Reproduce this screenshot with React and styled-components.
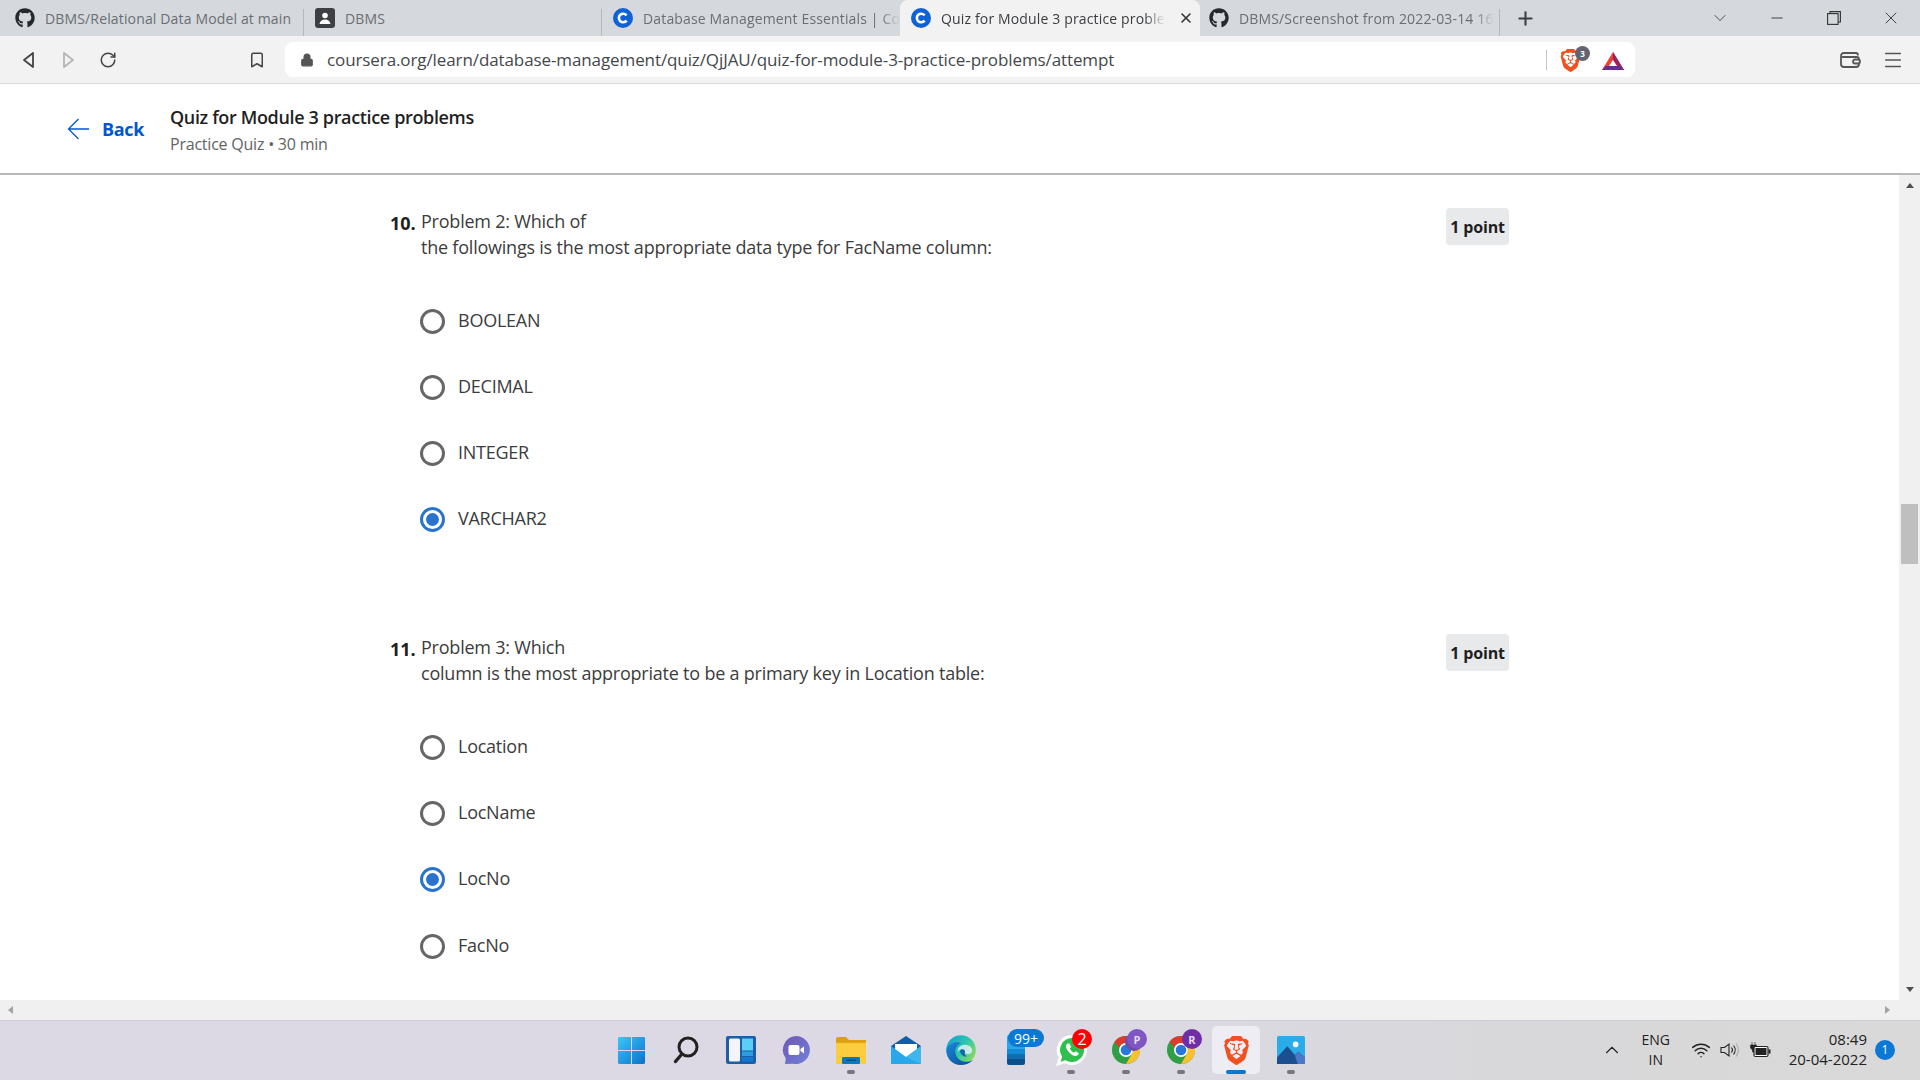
import React from "react";
import styled, { createGlobalStyle } from "styled-components";
import { FaGithub } from "react-icons/fa";
import { SiBrave } from "react-icons/si";
import { Lock, RotateCw, Bookmark, Plus, X, ChevronDown, ChevronUp, Minus, Menu, Wifi } from "lucide-react";

const GlobalStyle = createGlobalStyle`
  html, body { margin: 0; padding: 0; height: 100%; overflow: hidden; background: #fff; }
  * { box-sizing: border-box; }
  body { font-family: "Open Sans", "Noto Sans", sans-serif; }
`;

const Page = styled.div`
  width: 1920px;
  height: 1080px;
  display: flex;
  flex-direction: column;
  overflow: hidden;
`;

/* browser chrome */
const TabStrip = styled.div`
  height: 36px;
  background: #d5d8dc;
  display: flex;
  align-items: stretch;
  flex: none;
`;
const Tab = styled.div`
  width: ${(p) => p.$w}px;
  flex: none;
  display: flex;
  align-items: center;
  padding-left: ${(p) => p.$pad}px;
  gap: 10px;
  position: relative;
  background: ${(p) => (p.$active ? "#f2f2f2" : "transparent")};
  border-radius: ${(p) => (p.$active ? "8px 8px 0 0" : "0")};
  & > svg { flex: none; }
  &::after {
    content: "";
    display: ${(p) => (p.$sep ? "block" : "none")};
    position: absolute;
    right: 0;
    top: 9px;
    bottom: 0;
    width: 1px;
    background: #b4b7ba;
  }
`;
const TabTitle = styled.span`
  white-space: nowrap;
  font-size: 14px;
  letter-spacing: 0.15px;
  color: ${(p) => (p.$active ? "#3a3c3f" : "#6a6e73")};
  ${(p) =>
    p.$fade &&
    `-webkit-mask-image: linear-gradient(to right, #000 calc(100% - 20px), transparent);
     mask-image: linear-gradient(to right, #000 calc(100% - 20px), transparent);`}
`;
const TabClose = styled.span`
  display: flex;
  margin-left: auto;
  margin-right: 6px;
  color: #333;
`;
const NewTab = styled.div`
  width: 50px;
  display: flex;
  align-items: center;
  justify-content: center;
  color: #3c3f43;
`;
const WindowControls = styled.div`
  margin-left: auto;
  display: flex;
  align-items: center;
  color: #333;
`;
const WindowButton = styled.div`
  width: ${(p) => p.$w || 57}px;
  display: flex;
  justify-content: center;
`;

const Toolbar = styled.div`
  height: 48px;
  flex: none;
  background: #f2f2f2;
  border-bottom: 1px solid #d9d9d9;
  display: flex;
  align-items: center;
`;
const NavButton = styled.div`
  width: 40px;
  display: flex;
  justify-content: center;
  color: #444;
`;
const NavGroup = styled.div`
  display: flex;
  width: 285px;
  padding-left: 8px;
  & > :last-child { margin-left: 109px; }
`;
const Omnibox = styled.div`
  width: 1350px;
  height: 35px;
  background: #fff;
  border-radius: 8px;
  display: flex;
  align-items: center;
  padding: 0 10px 0 15px;
`;
const Url = styled.span`
  margin-left: 13px;
  font-size: 17px;
  letter-spacing: -0.1px;
  color: #44474a;
  white-space: nowrap;
  flex: 1;
`;
const OmniDivider = styled.span`
  width: 1px;
  height: 20px;
  background: #c4c4c4;
  margin-right: 12px;
`;
const ShieldWrap = styled.span`
  position: relative;
  display: flex;
  width: 30px;
  margin: 2px 12px 0 0;
`;
const ShieldCount = styled.span`
  position: absolute;
  left: 16px;
  top: -3px;
  width: 15px;
  height: 15px;
  border-radius: 50%;
  background: #62646f;
  color: #fff;
  font-size: 8px;
  font-weight: 700;
  display: flex;
  align-items: center;
  justify-content: center;
`;
const BatSlot = styled.span`
  display: flex;
  margin-top: 2px;
`;
const ToolbarEnd = styled.div`
  flex: 1;
  display: flex;
  align-items: center;
  justify-content: flex-end;
  gap: 21px;
  padding-right: 16px;
  color: #555;
`;

/* course header */
const Header = styled.header`
  height: 91px;
  flex: none;
  background: #fff;
  border-bottom: 2px solid #b9b9b9;
  display: flex;
  align-items: center;
  padding: 0 0 0 67px;
`;
const BackLink = styled.a`
  display: flex;
  align-items: center;
  gap: 13px;
  width: 103px;
  color: #0056d2;
  font-size: 18px;
  font-weight: 700;
  letter-spacing: -0.3px;
  margin-top: 1px;
`;
const HeaderText = styled.div`
  display: flex;
  flex-direction: column;
  gap: 4px;
  margin-top: 2px;
`;
const QuizTitle = styled.div`
  font-size: 18px;
  line-height: 24px;
  font-weight: 600;
  letter-spacing: -0.35px;
  color: #1f1f1f;
`;
const QuizSub = styled.div`
  font-size: 16px;
  line-height: 22px;
  letter-spacing: -0.22px;
  color: #636363;
`;

const Body = styled.div`
  flex: 1;
  min-height: 0;
  display: flex;
  background: #fff;
`;
const Content = styled.main`
  flex: 1;
  overflow: hidden;
  padding: 33px 0 0 390px;
`;
const VScroll = styled.div`
  width: 21px;
  background: #f0f0f0;
  display: flex;
  flex-direction: column;
  align-items: center;
  position: relative;
  justify-content: space-between;
  padding: 8px 0;
`;
const VThumb = styled.div`
  position: absolute;
  top: 329px;
  left: 2px;
  width: 17px;
  height: 60px;
  background: #bfbfbf;
`;
const Arrow = styled.span`
  width: 0;
  height: 0;
  border-left: 4.5px solid transparent;
  border-right: 4.5px solid transparent;
  ${(p) => (p.$down ? "border-top: 5px solid #505050;" : "border-bottom: 5px solid #505050;")}
`;
const HScroll = styled.div`
  height: 20px;
  flex: none;
  background: #f0f0f0;
  display: flex;
  align-items: center;
  justify-content: space-between;
  padding: 0 30px 0 8px;
`;
const SideArrow = styled.span`
  width: 0;
  height: 0;
  border-top: 4.5px solid transparent;
  border-bottom: 4.5px solid transparent;
  ${(p) => (p.$right ? "border-left: 5px solid #a3a3a3;" : "border-right: 5px solid #a3a3a3;")}
`;

/* question */
const Question = styled.section`
  width: 1119px;
  margin-bottom: 82px;
  & + & label:last-child { margin-top: 1px; }
`;
const QuestionHead = styled.div`
  display: grid;
  grid-template-columns: 31px 1fr 63px;
  align-items: start;
`;
const QuestionNo = styled.span`
  font-size: 18px;
  line-height: 28px;
  font-weight: 700;
  padding-top: 1px;
  color: #1f1f1f;
`;
const Prompt = styled.div`
  font-size: 18px;
  line-height: 26px;
  letter-spacing: -0.22px;
  color: #3c3c3c;
`;
const PointChip = styled.span`
  height: 37px;
  background: #e8e9eb;
  border-radius: 4px;
  font-size: 16px;
  font-weight: 700;
  letter-spacing: -0.15px;
  color: #1f1f1f;
  display: flex;
  align-items: center;
  justify-content: center;
`;
const Options = styled.div`
  margin: 28px 0 0 30px;
`;
const Option = styled.label`
  height: 66px;
  display: flex;
  align-items: center;
  gap: 13px;
  font-size: 18px;
  letter-spacing: -0.25px;
  color: #3c3c3c;
  padding-bottom: 2px;
`;
const Radio = styled.span`
  width: 25px;
  height: 25px;
  flex: none;
  margin-top: 3px;
  border-radius: 50%;
  border: 3px solid ${(p) => (p.$on ? "#2a73cc" : "#666")};
  display: flex;
  align-items: center;
  justify-content: center;
  &::after {
    content: "";
    display: ${(p) => (p.$on ? "block" : "none")};
    width: 13px;
    height: 13px;
    border-radius: 50%;
    background: #2a73cc;
  }
`;

/* taskbar */
const Taskbar = styled.footer`
  height: 60px;
  flex: none;
  background: linear-gradient(to right, #dcd9e4 0%, #dcd9e4 55%, #d8d8da 80%, #d9d9d9 100%);
  border-top: 1px solid #cfccd8;
  display: grid;
  grid-template-columns: 1fr auto 1fr;
  align-items: center;
`;
const TaskIcons = styled.div`
  grid-column: 2;
  display: flex;
  margin-left: 2px;
`;
const TaskItem = styled.div`
  width: 55px;
  height: 59px;
  padding-bottom: 1px;
  display: flex;
  align-items: center;
  justify-content: center;
  position: relative;
  &::before {
    content: "";
    display: ${(p) => (p.$active ? "block" : "none")};
    position: absolute;
    inset: 5px 3.5px 6px;
    background: #eeedf4;
    border-radius: 5px;
  }
  & > * { position: relative; }
`;
const Dot = styled.span`
  position: absolute !important;
  bottom: 6px;
  left: 50%;
  transform: translateX(-50%);
  width: ${(p) => (p.$active ? 20 : 8)}px;
  height: 4px;
  border-radius: 2px;
  background: ${(p) => (p.$active ? "#0078d4" : "#77767c")};
`;
const Badge = styled.span`
  position: absolute !important;
  top: 8px;
  left: ${(p) => p.$left}px;
  width: ${(p) => p.$w || 20}px;
  height: ${(p) => p.$h || 20}px;
  background: ${(p) => p.$bg};
  color: ${(p) => p.$color || "#fff"};
  border-radius: 12px;
  font-size: ${(p) => p.$fs}px;
  font-weight: ${(p) => p.$fw || 400};
  box-shadow: ${(p) => p.$shadow || "none"};
  display: flex;
  align-items: center;
  justify-content: center;
`;
const Tray = styled.div`
  grid-column: 3;
  display: flex;
  align-items: center;
  justify-content: flex-end;
  color: #222;
  padding: 0 25px 2px 0;
`;
const TrayChevron = styled.span`
  display: flex;
  margin-right: 16px;
`;
const Lang = styled.div`
  font-size: 14px;
  line-height: 20px;
  text-align: center;
  width: 34px;
  margin-right: 18px;
`;
const TrayIcons = styled.div`
  display: flex;
  align-items: center;
  gap: 9px;
  margin-right: 18px;
`;
const Clock = styled.div`
  font-size: 15px;
  line-height: 20px;
  text-align: right;
  margin: 0 8px 2px 0;
`;
const Notify = styled.span`
  width: 20px;
  height: 20px;
  border-radius: 50%;
  background: #0a78d4;
  color: #fff;
  font-size: 12px;
  display: flex;
  align-items: center;
  justify-content: center;
`;

const CourseraIcon = () => (
  <svg width="20" height="20" viewBox="0 0 20 20">
    <circle cx="10" cy="10" r="10" fill="#0f62d6" />
    <path d="M13.600 7.400a4.300 4.300 0 1 0 0 5.200" fill="none" stroke="#fff" strokeWidth="2.600" />
  </svg>
);
const ContactIcon = () => (
  <svg width="20" height="20" viewBox="0 0 20 20">
    <rect width="20" height="20" rx="3" fill="#3f4044" />
    <circle cx="10" cy="7.500" r="2.800" fill="#fff" />
    <path d="M4.500 16c.4-3 2.600-4.500 5.500-4.500s5.100 1.500 5.500 4.500z" fill="#fff" />
  </svg>
);
const TriangleIcon = ({ right, color }) => (
  <svg width="13" height="18" viewBox="0 0 13 18">
    <path d={right ? "M2 2l9 7-9 7z" : "M11 2L2 9l9 7z"} fill="none" stroke={color} strokeWidth="1.800" strokeLinejoin="round" />
  </svg>
);
const RestoreIcon = () => (
  <svg width="14" height="14" viewBox="0 0 14 14" fill="none" stroke="#333" strokeWidth="1.100">
    <rect x=".6" y="2.600" width="10.500" height="10.800" />
    <path d="M3 2.500V.6h10.400v10.400h-2.300" />
  </svg>
);
const BatIcon = () => (
  <svg width="24" height="20" viewBox="0 0 24 20">
    <path d="M12 1L23 19H1z" fill="#e9442f" />
    <path d="M12 1L23 19H17L12 10z" fill="#9e1f63" />
    <path d="M1 19h22l-3.500-4H4.500z" fill="#662d91" />
    <path d="M12 9l4 6H8z" fill="#fff" />
  </svg>
);
const WalletIcon = () => (
  <svg width="22" height="18" viewBox="0 0 22 18" fill="none" stroke="#555" strokeWidth="1.800">
    <path d="M2 5.500C2 3 3 2 5 2h12c1.500 0 2 1 2 2.500M2 5v8c0 2 1 3 3 3h12c2 0 3-1 3-3V8c0-1.500-1-2-2-2H3" />
    <rect x="14" y="8.500" width="7" height="4" rx="2" fill="#f2f2f2" />
  </svg>
);
const BackArrow = () => (
  <svg width="22" height="22" viewBox="0 0 22 22" fill="none" stroke="#0056d2" strokeWidth="1.300">
    <path d="M22 11H1.500M11.500 1L1.500 11l10 10" />
  </svg>
);

const WindowsIcon = () => (
  <svg width="29" height="29" viewBox="0 0 30 30">
    <defs>
      <linearGradient id="win" x1="0" y1="0" x2="1" y2="1">
        <stop offset="0" stopColor="#3cc6fa" />
        <stop offset="1" stopColor="#0a72c9" />
      </linearGradient>
    </defs>
    <path d="M1 2.500A1.500 1.500 0 0 1 2.500 1h12v13.500H1zM15.500 1h12A1.500 1.500 0 0 1 29 2.500v12H15.500zM1 15.500h13.500V29h-12A1.500 1.500 0 0 1 1 27.500zM15.500 15.500H29v12a1.500 1.500 0 0 1-1.500 1.500h-12z" fill="url(#win)" />
  </svg>
);
const SearchIcon = () => (
  <svg width="26" height="28" viewBox="0 0 26 28" fill="none" stroke="#222">
    <circle cx="15" cy="11" r="9" strokeWidth="3" />
    <path d="M8.500 18.500L2.500 25.500" strokeWidth="3.400" strokeLinecap="round" />
  </svg>
);
const WidgetsIcon = () => (
  <svg width="30" height="28" viewBox="0 0 30 28">
    <rect width="30" height="28" rx="2" fill="#1d5fa6" />
    <rect x="3" y="2.500" width="11" height="23" rx="1.500" fill="#f2f4f7" />
    <rect x="16" y="2.500" width="11" height="12" fill="#5ccdf5" />
    <rect x="16" y="15.500" width="11" height="4.500" fill="#2f9be0" />
    <rect x="16" y="21" width="11" height="4.500" fill="#117ad0" />
  </svg>
);
const ChatIcon = () => (
  <svg width="28" height="28" viewBox="0 0 28 28">
    <defs>
      <linearGradient id="chat" x1="0" y1="0" x2="1" y2="1">
        <stop offset="0" stopColor="#7058b4" />
        <stop offset="1" stopColor="#6f80d8" />
      </linearGradient>
    </defs>
    <path d="M14 0a14 14 0 1 1-3 27.700L3 28l.8-5.500A14 14 0 0 1 14 0z" fill="url(#chat)" />
    <rect x="6.500" y="9" width="11" height="10" rx="2" fill="#fff" />
    <path d="M18.500 13l3.500-2.500v7L18.500 15z" fill="#fff" />
  </svg>
);
const FolderIcon = () => (
  <svg width="30" height="27" viewBox="0 0 30 27">
    <path d="M0 2a2 2 0 0 1 2-2h8l3 3h17v5H0z" fill="#dc9f12" />
    <path d="M0 5h30v22H0z" fill="#fccd3f" />
    <path d="M0 5h30v1.200H0z" fill="#e5a91d" />
    <rect x="6" y="20" width="18" height="7" rx="1" fill="#0f77bd" />
    <rect x="10" y="22.500" width="10" height="1.500" fill="#0a4f85" />
  </svg>
);
const MailIcon = () => (
  <svg width="30" height="28" viewBox="0 0 30 28">
    <path d="M15 0L30 10v18H0V10z" fill="#0e5ea8" />
    <path d="M4 8h22v10L15 24 4 18z" fill="#fff" />
    <path d="M0 10l15 11 15-11v18H0z" fill="#28a8ea" />
    <path d="M15 21l15-11v18z" fill="#4cc2f1" opacity=".6" />
  </svg>
);
const EdgeIcon = () => (
  <svg width="30" height="30" viewBox="0 0 30 30">
    <defs>
      <linearGradient id="edgeA" x1="0" y1="0" x2="1" y2=".7">
        <stop offset="0" stopColor="#1598d6" />
        <stop offset=".55" stopColor="#2cc5b0" />
        <stop offset="1" stopColor="#86dd58" />
      </linearGradient>
      <linearGradient id="edgeB" x1="0" y1="0" x2="1" y2="1">
        <stop offset="0" stopColor="#1a86d8" />
        <stop offset="1" stopColor="#0a4c96" />
      </linearGradient>
    </defs>
    <circle cx="15" cy="15" r="14.800" fill="url(#edgeA)" />
    <path d="M.5 14C3 8 10 6 15 8c-5 2-7 7-5 12 2 6 10 9 17 5-4 4-8 5-12 5C6 30 0 23 .5 14z" fill="url(#edgeB)" />
    <path d="M12 14c1-3 5-5 9-4 4 1 6 4 5 7-1 2-5 3-8 1 1-2 0-4-2-4-2 0-3 1-4 3-.4-1-.4-2 0-3z" fill="#dfeef5" opacity=".85" />
    <path d="M14 16c1-2 4-2 5 0 0 2-1 4 2 5.500-3 .5-6-1-7-5.500z" fill="#0d63b4" />
  </svg>
);
const StoreIcon = () => (
  <svg width="18" height="30" viewBox="0 0 18 30">
    <path d="M0 2a2 2 0 0 1 2-2h14a2 2 0 0 1 2 2v12H0z" fill="#2aa6e8" />
    <rect y="14" width="18" height="5" fill="#138ad6" />
    <rect y="19" width="18" height="5" fill="#0f6db0" />
    <path d="M0 24h18v4a2 2 0 0 1-2 2H2a2 2 0 0 1-2-2z" fill="#0a4f8a" />
  </svg>
);
const WhatsappIcon = () => (
  <svg width="31" height="31" viewBox="0 0 31 31">
    <path d="M16 0a15 15 0 1 1-7 28.300L0 31l2.800-8.500A15 15 0 0 1 16 0z" fill="#fff" />
    <path d="M16 3a12 12 0 1 1-6.300 22.200L4.500 26.800l1.700-5A12 12 0 0 1 16 3z" fill="#2fbf4e" />
    <path d="M11.500 8.500c-2 1.500-2 4 0 7 2.500 3.500 5.500 5.500 8 5.500 1.500 0 3-1 3.300-2.800l-3.300-2-1.500 1.500c-1.500-.5-3.500-2.500-4.200-4.200l1.400-1.500-1.800-3.500z" fill="#fff" />
  </svg>
);
const ChromeIcon = () => (
  <svg width="28" height="28" viewBox="0 0 30 30">
    <circle cx="15" cy="15" r="15" fill="#2f9e44" />
    <path d="M15 0a15 15 0 0 1 13 7.500H15a7.500 7.500 0 0 0-7 4.800L2.500 6.500A15 15 0 0 1 15 0z" fill="#e03a2e" />
    <path d="M28 7.500A15 15 0 0 1 15 30l6.500-11.300A7.500 7.500 0 0 0 21.500 11z" fill="#fbc02d" />
    <circle cx="15" cy="15" r="7.500" fill="#fff" />
    <circle cx="15" cy="15" r="5.700" fill="#2a76dc" />
  </svg>
);
const PhotosIcon = () => (
  <svg width="28" height="28" viewBox="0 0 30 30">
    <rect width="30" height="30" rx="2" fill="#29ace8" />
    <circle cx="20" cy="9" r="3" fill="#fff" />
    <path d="M0 30V23L11 11l8 9 4-3 7 6v7z" fill="#1b4f8f" />
    <path d="M19 20l4-3 7 6v7H22z" fill="#4c78c9" />
  </svg>
);
const VolumeIcon = () => (
  <svg width="20" height="18" viewBox="0 0 20 18" fill="none" stroke="#222" strokeWidth="1.100">
    <path d="M1 6.500h3.500L9 3v12l-4.500-3.500H1z" />
    <path d="M11.500 6.500a4 4 0 0 1 0 5M13.500 4.500a7 7 0 0 1 0 9" />
    <path d="M16 2.500a10 10 0 0 1 0 13" stroke="#aaa" />
  </svg>
);
const BatteryIcon = () => (
  <svg width="22" height="18" viewBox="0 0 22 18">
    <path d="M3 1v3M6 1v3M1.500 4h6v3l-2 2v2h-2V9l-2-2z" fill="#222" stroke="#222" strokeWidth=".6" />
    <rect x="5" y="5.500" width="14" height="10" rx="1.500" fill="#fff" stroke="#222" strokeWidth="1.200" />
    <rect x="6.500" y="7" width="11" height="7" fill="#222" />
    <rect x="19.500" y="8.500" width="2" height="4" fill="#222" />
  </svg>
);

const tabs = [
  { id: 1, w: 304, icon: <FaGithub size={20} color="#24292e" />, title: "DBMS/Relational Data Model at main", sep: true, pad: 15 },
  { id: 2, w: 298, icon: <ContactIcon />, title: "DBMS", sep: true, pad: 11 },
  { id: 3, w: 298, icon: <CourseraIcon />, title: "Database Management Essentials | Co", pad: 11, fade: true },
  { id: 4, w: 300, icon: <CourseraIcon />, title: "Quiz for Module 3 practice proble", active: true, pad: 11, fade: true },
  { id: 5, w: 300, icon: <FaGithub size={20} color="#24292e" />, title: "DBMS/Screenshot from 2022-03-14 16", sep: true, pad: 9, fade: true },
];

const questions = [
  {
    no: "10.",
    first: "Problem 2: Which of",
    second: "the followings is the most appropriate data type for FacName column:",
    options: ["BOOLEAN", "DECIMAL", "INTEGER", "VARCHAR2"],
    picked: "VARCHAR2",
  },
  {
    no: "11.",
    first: "Problem 3: Which",
    second: "column is the most appropriate to be a primary key in Location table:",
    options: ["Location", "LocName", "LocNo", "FacNo"],
    picked: "LocNo",
  },
];

const App = () => (
  <Page>
    <GlobalStyle />
    <TabStrip>
      {tabs.map((t) => (
        <Tab key={t.id} $w={t.w} $sep={t.sep} $active={t.active} $pad={t.pad}>
          {t.icon}
          <TabTitle $active={t.active} $fade={t.fade}>{t.title}</TabTitle>
          {t.active && (
            <TabClose>
              <X size={16} strokeWidth={2.4} />
            </TabClose>
          )}
        </Tab>
      ))}
      <NewTab>
        <Plus size={21} strokeWidth={2.4} />
      </NewTab>
      <WindowControls>
        <WindowButton>
          <ChevronDown size={20} strokeWidth={1} />
        </WindowButton>
        <WindowButton>
          <Minus size={18} strokeWidth={1.2} />
        </WindowButton>
        <WindowButton>
          <RestoreIcon />
        </WindowButton>
        <WindowButton $w={58}>
          <X size={20} strokeWidth={1.1} />
        </WindowButton>
      </WindowControls>
    </TabStrip>

    <Toolbar>
      <NavGroup>
        <NavButton>
          <TriangleIcon color="#444" />
        </NavButton>
        <NavButton>
          <TriangleIcon right color="#b5b5b5" />
        </NavButton>
        <NavButton>
          <RotateCw size={18} strokeWidth={2} />
        </NavButton>
        <NavButton>
          <Bookmark size={18} strokeWidth={2} />
        </NavButton>
      </NavGroup>
      <Omnibox>
        <Lock size={14} fill="#555" color="#555" />
        <Url>coursera.org/learn/database-management/quiz/QjJAU/quiz-for-module-3-practice-problems/attempt</Url>
        <OmniDivider />
        <ShieldWrap>
          <SiBrave size={23} color="#f1501f" />
          <ShieldCount>3</ShieldCount>
        </ShieldWrap>
        <BatSlot>
          <BatIcon />
        </BatSlot>
      </Omnibox>
      <ToolbarEnd>
        <WalletIcon />
        <Menu size={22} strokeWidth={1.6} />
      </ToolbarEnd>
    </Toolbar>

    <Header>
      <BackLink>
        <BackArrow />
        Back
      </BackLink>
      <HeaderText>
        <QuizTitle>Quiz for Module 3 practice problems</QuizTitle>
        <QuizSub>Practice Quiz • 30 min</QuizSub>
      </HeaderText>
    </Header>

    <Body>
      <Content>
        {questions.map((q) => (
          <Question key={q.no}>
            <QuestionHead>
              <QuestionNo>{q.no}</QuestionNo>
              <Prompt>
                {q.first}
                <br />
                {q.second}
              </Prompt>
              <PointChip>1 point</PointChip>
            </QuestionHead>
            <Options>
              {q.options.map((o) => (
                <Option key={o}>
                  <Radio $on={o === q.picked} />
                  {o}
                </Option>
              ))}
            </Options>
          </Question>
        ))}
      </Content>
      <VScroll>
        <Arrow />
        <VThumb />
        <Arrow $down />
      </VScroll>
    </Body>
    <HScroll>
      <SideArrow />
      <SideArrow $right />
    </HScroll>

    <Taskbar>
      <TaskIcons>
        <TaskItem><WindowsIcon /></TaskItem>
        <TaskItem><SearchIcon /></TaskItem>
        <TaskItem><WidgetsIcon /></TaskItem>
        <TaskItem><ChatIcon /></TaskItem>
        <TaskItem><FolderIcon /><Dot /></TaskItem>
        <TaskItem><MailIcon /></TaskItem>
        <TaskItem><EdgeIcon /></TaskItem>
        <TaskItem>
          <StoreIcon />
          <Badge $left={19.5} $w={36} $h={18} $bg="#0a78d4" $fs={14}>99+</Badge>
        </TaskItem>
        <TaskItem>
          <WhatsappIcon />
          <Badge $left={28.5} $bg="#f00" $fs={16}>2</Badge>
          <Dot />
        </TaskItem>
        <TaskItem>
          <ChromeIcon />
          <Badge $left={28.5} $bg="#7e57c2" $color="#e4dcf2" $fs={11} $fw={700} $shadow="-3px 3px 0 -1px #6b4aa8">P</Badge>
          <Dot />
        </TaskItem>
        <TaskItem>
          <ChromeIcon />
          <Badge $left={28.5} $bg="#6f2da8" $color="#e4dcf2" $fs={11} $fw={700}>R</Badge>
          <Dot />
        </TaskItem>
        <TaskItem $active>
          <SiBrave size={29} color="#f1501f" />
          <Dot $active />
        </TaskItem>
        <TaskItem><PhotosIcon /><Dot /></TaskItem>
      </TaskIcons>
      <Tray>
        <TrayChevron><ChevronUp size={22} strokeWidth={1.2} /></TrayChevron>
        <Lang>ENG<br />IN</Lang>
        <TrayIcons>
          <Wifi size={20} strokeWidth={1.8} />
          <VolumeIcon />
          <BatteryIcon />
        </TrayIcons>
        <Clock>08:49<br />20-04-2022</Clock>
        <Notify>1</Notify>
      </Tray>
    </Taskbar>
  </Page>
);

export default App;
